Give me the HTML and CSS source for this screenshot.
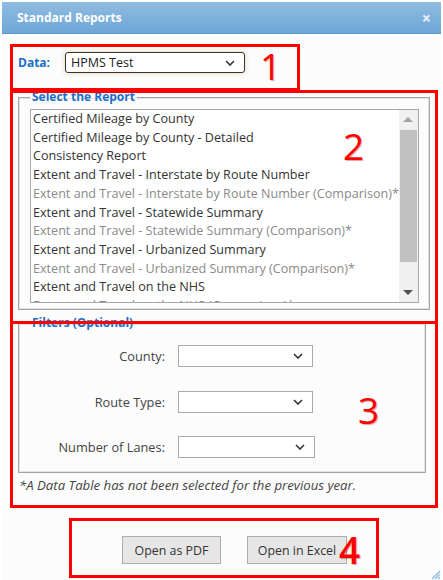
FILE: index.html
```html
<!DOCTYPE html>
<html>
<head>
    <title>Standard Reports</title>
    <link rel="stylesheet" href="styles.css">
</head>
<body>
<div class="page">
    <div class="dialog">
        <div class="titlebar">
            <span class="title">Standard Reports</span>
            <span class="close">&times;</span>
        </div>

        <div class="content">
            <div class="data-row">
                <label class="data-label">Data:</label>
                <div class="select select-data">
                    <span>HPMS Test</span>
                    <svg class="chev" width="10" height="6" viewBox="0 0 10 6"><path d="M1 1 L5 5 L9 1" fill="none" stroke="#333" stroke-width="1.6"/></svg>
                </div>
            </div>

            <fieldset class="group group-report">
                <legend>Select the Report</legend>
                <div class="listbox">
                    <ul class="items">
                        <li>Certified Mileage by County</li>
                        <li>Certified Mileage by County - Detailed</li>
                        <li>Consistency Report</li>
                        <li>Extent and Travel - Interstate by Route Number</li>
                        <li class="off">Extent and Travel - Interstate by Route Number (Comparison)*</li>
                        <li>Extent and Travel - Statewide Summary</li>
                        <li class="off">Extent and Travel - Statewide Summary (Comparison)*</li>
                        <li>Extent and Travel - Urbanized Summary</li>
                        <li class="off">Extent and Travel - Urbanized Summary (Comparison)*</li>
                        <li>Extent and Travel on the NHS</li>
                        <li class="off">Extent and Travel on the NHS (Comparison)*</li>
                    </ul>
                    <div class="scrollbar">
                        <div class="arrow arrow-up"></div>
                        <div class="thumb"></div>
                        <div class="arrow arrow-down"></div>
                    </div>
                </div>
            </fieldset>

            <fieldset class="group group-filters">
                <legend>Filters (Optional)</legend>
                <div class="filters">
                    <label>County:</label>
                    <div class="select">
                        <span></span>
                        <svg class="chev" width="10" height="6" viewBox="0 0 10 6"><path d="M1 1 L5 5 L9 1" fill="none" stroke="#333" stroke-width="1.6"/></svg>
                    </div>
                    <label>Route Type:</label>
                    <div class="select">
                        <span></span>
                        <svg class="chev" width="10" height="6" viewBox="0 0 10 6"><path d="M1 1 L5 5 L9 1" fill="none" stroke="#333" stroke-width="1.6"/></svg>
                    </div>
                    <label>Number of Lanes:</label>
                    <div class="select select-wide">
                        <span></span>
                        <svg class="chev" width="10" height="6" viewBox="0 0 10 6"><path d="M1 1 L5 5 L9 1" fill="none" stroke="#333" stroke-width="1.6"/></svg>
                    </div>
                </div>
            </fieldset>

            <p class="note">*A Data Table has not been selected for the previous year.</p>

            <div class="buttons">
                <button class="btn">Open as PDF</button>
                <button class="btn">Open in Excel</button>
            </div>
        </div>

        <svg class="grip" width="12" height="12" viewBox="0 0 12 12">
            <path d="M11 3 L3 11 M11 6 L6 11 M11 9 L9 11" stroke="#8fb8e0" stroke-width="1.2"/>
        </svg>
    </div>

    <!-- annotation boxes drawn over the screenshot -->
    <div class="mark mark-1"></div>
    <div class="mark mark-2"></div>
    <div class="mark mark-3"></div>
    <div class="mark mark-4"></div>
    <span class="num num-1">1</span>
    <span class="num num-2">2</span>
    <span class="num num-3">3</span>
    <span class="num num-4">4</span>
</div>
</body>
</html>
```

FILE: styles.css
```css
body {
    margin: 0;
    background: #fff;
    font-family: "Open Sans", "Noto Sans", sans-serif;
    color: #333;
}

.page {
    position: relative;
    width: 443px;
    height: 580px;
    overflow: hidden;
}

/* Dialog window */
.dialog {
    position: relative;
    margin: 2px 2px 0;
    height: 578px;
    background: #fcfcfc;
}

.titlebar {
    height: 32px;
    display: flex;
    align-items: center;
    justify-content: space-between;
    padding: 0 10px 0 15px;
    background: linear-gradient(#90bce1, #6ea6d7);
    border-bottom: 1px solid #5f98cb;
    box-sizing: border-box;
    color: #fff;
}

.title {
    font-size: 12px;
    font-weight: 700;
}

.close {
    font-size: 16px;
    font-weight: 700;
    color: #e8f1fa;
}

.content {
    padding: 0 15px 0 16px;
}

/* Data selector */
.data-row {
    display: flex;
    align-items: center;
    margin-top: 18px;
}

.data-label {
    width: 47px;
    color: #1a6fc9;
    font-size: 12px;
    font-weight: 700;
}

.select {
    display: flex;
    align-items: center;
    justify-content: space-between;
    width: 135px;
    height: 22px;
    box-sizing: border-box;
    padding: 0 9px 0 5px;
    background: #fff;
    border: 1px solid #aaa;
    font-size: 12.5px;
}

.select-data {
    width: 180px;
    height: 21px;
    border: 1px solid #333;
    border-radius: 3px;
    box-shadow: 0 0 4px 1px rgba(232, 205, 160, 0.6);
    color: #222;
}

.select-wide {
    width: 137px;
}

/* Fieldsets */
.group {
    margin: 0;
    padding: 5px 10px 6px 11px;
    border: 1px solid #a3a3a3;
    box-shadow: inset 0 0 0 1px #e4e4e4;
}

.group legend {
    padding: 0 2px;
    color: #1a6fc9;
    font-size: 12px;
    font-weight: 700;
    line-height: 14px;
}

.group-report {
    margin-top: 17px;
}

.group-filters {
    margin-top: 6px;
    padding-top: 15px;
    padding-bottom: 14px;
}

/* Report list */
.listbox {
    display: flex;
    height: 194px;
    box-sizing: border-box;
    border: 1px solid #a9a9a9;
    background: #fff;
    overflow: hidden;
}

.items {
    flex: 1;
    list-style: none;
    margin: 0;
    padding: 0 0 0 2px;
    overflow: hidden;
    white-space: nowrap;
    font-size: 12.6px;
    line-height: 18.7px;
    color: #333;
}

.items .off {
    color: #8a8a8a;
}

.scrollbar {
    width: 19px;
    display: flex;
    flex-direction: column;
    align-items: center;
    background: #f0f0f0;
}

.arrow {
    width: 0;
    height: 0;
    border-left: 5px solid transparent;
    border-right: 5px solid transparent;
}

.arrow-up {
    margin-top: 7px;
    border-bottom: 5px solid #a3a3a3;
}

.arrow-down {
    margin-top: auto;
    margin-bottom: 7px;
    border-top: 5px solid #505050;
}

.thumb {
    width: 17px;
    height: 132px;
    margin-top: 8px;
    background: #c1c1c1;
}

/* Filters */
.filters {
    display: grid;
    grid-template-columns: 135px auto;
    column-gap: 13px;
    row-gap: 23.5px;
    align-items: center;
    justify-items: start;
}

.filters label {
    justify-self: end;
    font-size: 12.8px;
    color: #444;
}

.note {
    margin: 3px 0 0 1px;
    font-size: 13.2px;
    font-style: italic;
    color: #444;
}

/* Action buttons */
.buttons {
    display: flex;
    gap: 26px;
    margin-top: 42px;
    padding-left: 104px;
}

.btn {
    width: 99px;
    height: 28px;
    padding: 0;
    font-family: "Open Sans", "Noto Sans", sans-serif;
    font-size: 12.4px;
    color: #333;
    background: #e6e6e6;
    border: 1px solid #adadad;
}

.btn + .btn {
    width: 100px;
}

.grip {
    position: absolute;
    right: 0;
    bottom: 0;
}

/* Red annotation overlays */
.mark {
    position: absolute;
    box-sizing: border-box;
    border: 3px solid #f00;
}

.mark-1 { left: 10px; top: 44px; width: 290px; height: 47px; }
.mark-2 { left: 10px; top: 90px; width: 428px; height: 234px; }
.mark-3 { left: 10px; top: 321px; width: 428px; height: 187px; }
.mark-4 { left: 69px; top: 518px; width: 310px; height: 60px; }

.num {
    position: absolute;
    font-size: 37px;
    line-height: 37px;
    color: #f00;
    text-shadow: 1px 1px 1px rgba(120, 0, 0, 0.35);
}

.num-1 { left: 260px; top: 47px; }
.num-2 { left: 343px; top: 127px; }
.num-3 { left: 358px; top: 391px; }
.num-4 { left: 339px; top: 531px; font-weight: 600; }
```
